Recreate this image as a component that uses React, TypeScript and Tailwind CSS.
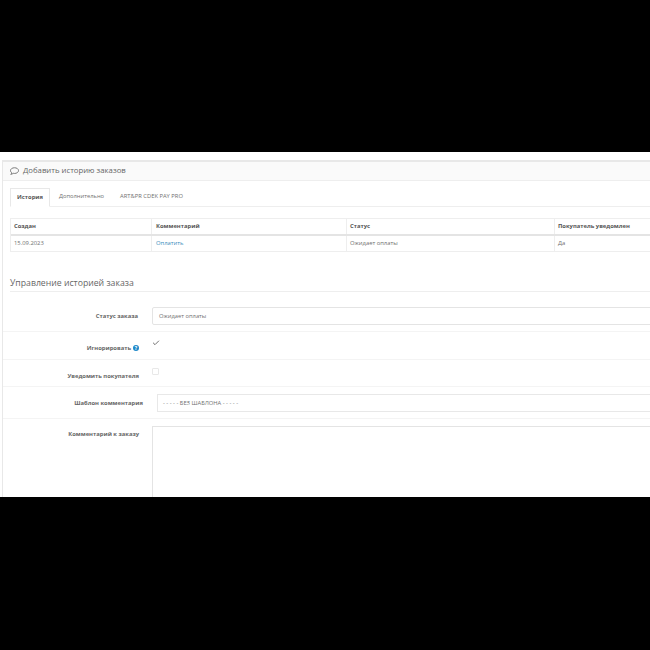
import React from 'react';
import { Check } from 'lucide-react';

const labelClass =
  'text-right text-[5.85px] font-bold text-[#666]';

const Row = ({ h, pt, w, label, extra, children }: { h: string; pt: string; w: string; label: string; extra?: React.ReactNode; children: React.ReactNode }) => (
  <div className={`flex border-b border-[#f4f4f4] ${h}`}>
    <div className={`shrink-0 flex justify-end items-center self-start gap-[2px] ${labelClass} ${w} ${pt}`}>
      <span>{label}</span>
      {extra}
    </div>
    {children}
  </div>
);

export default function App() {
  return (
    <div className="flex h-[650px] w-[650px] flex-col overflow-hidden bg-black font-['Open_Sans',sans-serif]">
      <div className="h-[152px] shrink-0" />
      <div className="h-[345px] shrink-0 overflow-hidden bg-white pl-[2px] pt-[8px]">
        <div className="h-full border-l border-t-2 border-[#e8e8e8]">
          <div className="flex h-[19px] items-center gap-[4px] border-b border-[#eee] bg-[#fafafa] pb-px pl-[7px] pt-[1px] text-[7.75px] text-[#666]">
            <svg width="9" height="8" viewBox="0 0 18 16" fill="none" stroke="#555" strokeWidth="1.5" className="shrink-0">
              <path d="M9 1.5c4.4 0 8 2.4 8 5.7s-3.6 5.7-8 5.7c-.9 0-1.8-.1-2.6-.3C5.3 13.6 3.6 14.5 1.5 14.7c1-.9 1.7-2 1.9-3.1C1.900 10.500 1 9 1 7.200 1 3.900 4.600 1.500 9 1.500z" />
            </svg>
            <span>Добавить историю заказов</span>
          </div>

          <div className="ml-[7px] mt-[6px] flex h-[20px] items-end border-b border-[#eee] text-[5.8px] text-[#707070]">
            <div className="-mb-px flex h-[19px] w-[40px] items-center justify-center border border-b-white border-[#e8e8e8] font-bold text-[#555]">
              История
            </div>
            <div className="flex h-[19px] items-center pl-[9px]">Дополнительно</div>
            <div className="flex h-[19px] items-center pl-[16px]">ART&amp;PR CDEK PAY PRO</div>
          </div>

          <div className="-mr-[4px] ml-[7px] mt-[11px] border border-[#eee] text-[5.85px]">
            <div className="flex h-[17px] items-center border-b-2 border-[#e4e4e4] font-bold text-[#555]">
              <div className="flex h-full w-[141px] items-center border-r border-[#eee] pl-[3px]">Создан</div>
              <div className="flex h-full w-[195px] items-center border-r border-[#eee] pl-[4px]">Комментарий</div>
              <div className="flex h-full w-[208px] items-center border-r border-[#eee] pl-[3px]">Статус</div>
              <div className="pl-[3px]">Покупатель уведомлен</div>
            </div>
            <div className="flex h-[15px] items-center text-[#707070]">
              <div className="flex h-full w-[141px] items-center border-r border-[#eee] pl-[3px]">15.09.2023</div>
              <div className="flex h-full w-[195px] items-center border-r border-[#eee] pl-[4px] text-[#3c8dbc]">Оплатить</div>
              <div className="flex h-full w-[208px] items-center border-r border-[#eee] pl-[3px]">Ожидает оплаты</div>
              <div className="pl-[3px]">Да</div>
            </div>
          </div>

          <div className="ml-[7px] mt-[24px] flex h-[16px] items-center border-b border-[#eee] pt-[1px] text-[8.7px] text-[#666]">
            Управление историей заказа
          </div>

          <div className="pt-[15px]">
            <Row h="h-[25px]" w="w-[135px]" pt="pt-[5px]" label="Статус заказа">
              <div className="-mr-[4px] ml-[14px] flex h-[18px] flex-1 items-center rounded-[2px] border border-[#e4e4e4] pl-[6px] text-[5.8px] text-[#707070]">
                Ожидает оплаты
              </div>
            </Row>
            <Row
              h="h-[28px]"
              w="w-[136px]"
              pt="pt-[12px]"
              label="Игнорировать"
              extra={
                <span className="flex h-[6px] w-[6px] items-center justify-center rounded-full bg-[#1e88c9] text-[5px] font-bold leading-none text-white">
                  ?
                </span>
              }
            >
              <div className="ml-[13px] mt-[7px] flex h-[7px] w-[7px] items-center justify-center">
                <Check size={8} strokeWidth={2.5} className="shrink-0 text-[#555]" />
              </div>
            </Row>
            <Row h="h-[27px]" w="w-[136px]" pt="pt-[12px]" label="Уведомить покупателя">
              <div className="ml-[13px] mt-[8px] h-[7px] w-[7px] rounded-[1px] border border-[#e8e8e8]" />
            </Row>
            <Row h="h-[32px]" w="w-[140px]" pt="pt-[12px]" label="Шаблон комментария">
              <div className="-mr-[4px] ml-[14px] mt-[7px] flex h-[18px] flex-1 items-center border border-[#e8e8e8] pl-[5px] text-[5.8px] text-[#707070]">
                - - - - - БЕЗ ШАБЛОНА - - - - -
              </div>
            </Row>
            <div className="flex">
              <div className={`w-[136px] shrink-0 pt-[11px] ${labelClass}`}>Комментарий к заказу</div>
              <div className="-mr-[4px] ml-[13px] mt-[7px] h-[90px] flex-1 border border-[#e4e4e4]" />
            </div>
          </div>
        </div>
      </div>
      <div className="flex-1" />
    </div>
  );
}
